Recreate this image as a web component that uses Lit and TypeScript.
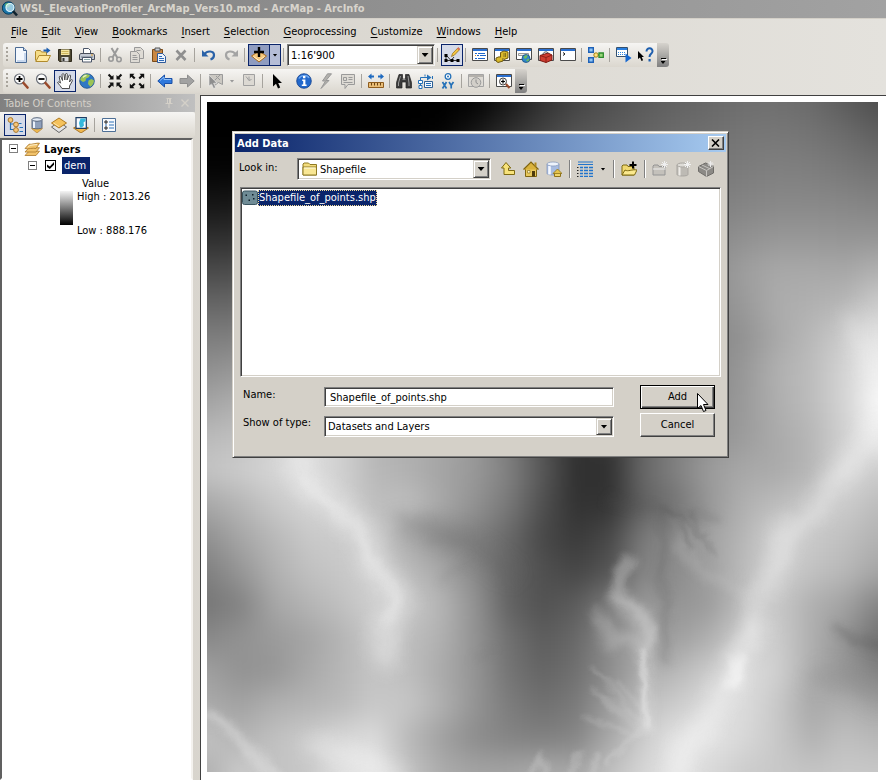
import { LitElement, html, svg, css, TemplateResult } from "lit";
import { customElement, property, state } from "lit/decorators.js";
import { classMap } from "lit/directives/class-map.js";

type Glyph = TemplateResult;

/* 16 x 16 drawings, keyed by command name */
const ICONS: Record<string, Glyph> = {
  newdoc: svg`<path d="M2.500 .5h8l3 3v12h-11z" fill="#f4f8fd" stroke="#4a6a94"/><path d="M4 14h8V6" fill="none" stroke="#c8d8ee" stroke-width="2"/><path d="M10.500 .5v3h3" fill="#cfdcee" stroke="#4a6a94"/>`,
  open: svg`<path d="M.5 13.500V4.500l1-1h4l1 1.500h5v3" fill="#f5dc86" stroke="#b08a2c"/><path d="M.8 14.500 4 8.500h11.500l-3 6z" fill="#ffe9a0" stroke="#b08a2c"/><path d="M8.500 3.500h4" stroke="#1c5fb0" stroke-width="2"/><path d="M11.500 .5 15.500 3.500l-4 3z" fill="#1c5fb0"/>`,
  save: svg`<path d="M1.500 2.500h13v12h-12l-1-1z" fill="#4c4630" stroke="#2f2a1c"/><path d="M4 2.500h8.500v5.500H4z" fill="#f4e6a4"/><path d="M4.500 4.500h7M4.500 6.500h7" stroke="#cdb55c"/><path d="M4.500 10h7v4.500h-7z" fill="#d9d9d9"/><path d="M5.500 11h2v3h-2z" fill="#333"/>`,
  print: svg`<path d="M4.500 6V1.500h5l2 2V6" fill="#fff" stroke="#4a5568"/><path d="M1.500 6.500h13l1 1.500v4.500h-15V8z" fill="#c4cad4" stroke="#4a4f5a"/><path d="M2 10h12" stroke="#77808c"/><path d="M3.500 10.500h9v4.500h-9z" fill="#fff" stroke="#4a5568"/><path d="M5 12.500h6" stroke="#8aa"/><path d="M12 8h2" stroke="#e09a20"/>`,
  cut: svg`<g fill="none" stroke="#9a9a9a"><path d="m4.500 1 6 10M11 1 5.500 10.500" stroke-width="2"/><circle cx="4" cy="12" r="2.200" stroke-width="1.600"/><circle cx="12" cy="12.500" r="2.200" stroke-width="1.600"/></g>`,
  copy: svg`<g fill="#dedbd5" stroke="#999"><path d="M5.500 .5h6l3 3v8h-9z"/><path d="M1.500 4.500h6l3 3v8h-9z"/><path d="M3.500 8.500h4M3.500 10.500h5M3.500 12.500h5M7.500 3.500h4"/></g>`,
  paste: svg`<path d="M1.500 2.500h10v12h-10z" fill="#c98742" stroke="#7a4a18"/><path d="M4 1h5v3H4z" fill="#c9ced6" stroke="#555"/><path d="M6.500 6.500h5l3 3v6h-8z" fill="#eef4fd" stroke="#2e5a9a"/><path d="M8 9.500h3M8 11.500h5M8 13.500h5" stroke="#2e6ab8"/>`,
  remove: svg`<path d="m3.500 3.500 9 9.500m0-9.500-9 9.500" stroke="#8f8f8f" stroke-width="2.600"/>`,
  undo: svg`<path d="M3.500 7C6 3.500 13 3.500 13 8c0 2.500-2 4-3.500 4.500" fill="none" stroke="#2a62a8" stroke-width="2.200"/><path d="M1 3v6.500h6.500z" fill="#2a62a8"/>`,
  redo: svg`<path d="M12.500 7C10 3.500 3 3.500 3 8c0 2.500 2 4 3.500 4.500" fill="none" stroke="#a4a4a4" stroke-width="2.200"/><path d="M15 3v6.500H8.500z" fill="#a4a4a4"/>`,
  adddata: svg`<path d="m8 15-7.500-6L8 4l7.500 5z" fill="#f6c77a" stroke="#a86a1e"/><path d="m2.500 9.500 5.500 4 5.500-4" fill="none" stroke="#fff0cc"/><path d="M8 0v10M3 5h10" stroke="#000" stroke-width="2.400"/>`,
  editor: svg`<path d="M2 8.500v5h12" fill="none" stroke="#333"/><path d="m3 9 4 4.500 3-3.500" fill="none" stroke="#333"/><g fill="#000"><path d="M.5 7h3v3h-3zM.5 12h3v3h-3zM6.500 12h3v3h-3zM12.500 12h3v3h-3z"/></g><path d="m7.500 9.500 1-3L14 .8l1.800 1.700-5.500 5.700z" fill="#f5c542" stroke="#8b6914" stroke-width=".7"/><path d="m13 1.800 1.200-1.500 1.800 1.500-1.300 1.500z" fill="#d86a5a"/>`,
  contents: svg`<path d="M.5 1.500h15v12H.5z" fill="#fff" stroke="#4a4a4a"/><path d="M1 2h14v2H1z" fill="#2a6fd0"/><path d="M3 6.500h2m1 0h7M5 8.500h2m1 0h6M3 11.500h2m1 0h7" stroke="#1f66c8"/><path d="M3 8.500h1" stroke="#e08a20"/>`,
  catalog: svg`<path d="M.5 1.500h15v12H.5z" fill="#fff" stroke="#4a4a4a"/><path d="M1 2h14v2H1z" fill="#2a6fd0"/><path d="M6.500 5.500 10 4l4 1v6l-4 1.500-1-1V14l-5 1.500-2-1.500v-3l3-1.200 1.500.4z" fill="#d9b92c" stroke="#6e5a10"/><path d="M10 6v4M11.500 6v4" stroke="#8a7418"/>`,
  search: svg`<path d="M.5 1.500h15v11H.5z" fill="#fff" stroke="#4a4a4a"/><path d="M1 2h14v2H1z" fill="#2a6fd0"/><path d="M2.500 6.500h10v2h-10z" fill="#eee" stroke="#999"/><circle cx="10" cy="11.500" r="4" fill="#2f86cc" stroke="#1b4f80" stroke-width=".8"/><path d="M7.500 10c1-1.500 3-2 4-1.500l-.5 2-2 1.500zM10 14l2-2.500 1.500.8L12 14.500z" fill="#6dbb5c"/>`,
  toolbox: svg`<path d="M.5 1.500h15v12H.5z" fill="#fff" stroke="#4a4a4a"/><path d="M1 2h14v2H1z" fill="#2a6fd0"/><path d="M2 8.500 10 6l4 2v5l-6 2.500-6-2z" fill="#cf3c30" stroke="#7d1a12"/><path d="m2 8.500 6 2 6-2.500M8 10.500v5" stroke="#8e2018" fill="none"/><path d="M5 7.500c0-3 5-3.500 5-1" fill="none" stroke="#444"/>`,
  python: svg`<path d="M.5 1.500h15v12H.5z" fill="#fff" stroke="#4a4a4a"/><path d="M1 2h14v2H1z" fill="#2a6fd0"/><path d="m3 5.500 2 1.500-2 1.500" fill="none" stroke="#111"/>`,
  model: svg`<path d="M3.500 3.500 8 8l-4.500 5M8 8h5" fill="none" stroke="#333"/><path d="M.7.7h4.600v4.600H.7zM.7 10.700h4.600v4.600H.7z" fill="#8fc4f4" stroke="#1f62b8" stroke-width="1.400"/><circle cx="8" cy="8" r="2.200" fill="#ffe27a" stroke="#a8841c"/><path d="M11 6h4.300v4.300H11z" fill="#9ad67a" stroke="#2c8a2c" stroke-width="1.300"/>`,
  windowplay: svg`<path d="M.5 .5h11v9H.5z" fill="#fff" stroke="#34506e"/><path d="M1 1h10v2H1z" fill="#2a7fe0"/><path d="M2 5.500h1m1 0h1m1 0h1m1 0h1M2 7.500h1m1 0h1m1 0h1m1 0h1" stroke="#2f86e0"/><path d="m9.500 6.500 6 4.500-6 4.500z" fill="#1668d0"/>`,
  whatsthis: svg`<path d="M0 4v8l2-1.500 1.500 3.500 1.600-.8L3.700 10H6z" fill="#000"/><path d="M8.500 4.500c0-4.500 6.500-4 6 0-.3 2.500-3 2.300-3 5.500" fill="none" stroke="#1f5fae" stroke-width="2"/><path d="M10.500 12h2.200v2.500h-2.200z" fill="#1f5fae"/>`,
  zoomin: svg`<circle cx="6.500" cy="6" r="5" fill="#fdfdfd" stroke="#6a6f78" stroke-width="1.200"/><path d="M6.500 3v6M3.500 6h6" stroke="#000" stroke-width="1.800"/><path d="m10.500 10 4 4.500" stroke="#9a4a2c" stroke-width="2.600" stroke-linecap="round"/>`,
  zoomout: svg`<circle cx="6.500" cy="6" r="5" fill="#fdfdfd" stroke="#6a6f78" stroke-width="1.200"/><path d="M3.500 6h6" stroke="#000" stroke-width="1.800"/><path d="m10.500 10 4 4.500" stroke="#9a4a2c" stroke-width="2.600" stroke-linecap="round"/>`,
  pan: svg`<path d="M5 15.500c-1-2-3-4-4.500-6 .8-1 2-.8 3 .7L2.200 4C2.500 2.800 3.700 3 4 4l1.500 3.500L5 1.500C5.500.3 6.700.5 7 1.500L7.800 7 8.500 1C9 0 10.200.2 10.300 1.200L10 7l2-4.500c.5-1 1.800-.6 1.600.5L12.500 9l1.500-2c.8-.8 1.800-.2 1.500.7L12.500 13v2.500z" fill="#fff" stroke="#3c3c3c" stroke-width=".9"/>`,
  globe: svg`<circle cx="8" cy="8" r="7.300" fill="#2f78c4" stroke="#1e4f88" stroke-width=".8"/><path d="M5 1.800c2-.8 4.500-.6 6 .6l-1.500 2L7 5.500 6.500 8 4 9 1.200 7C1.500 5 3 2.700 5 1.800zM9.500 7.500l3-1.500 2.500 1.500c0 2.500-1.500 5-3.500 6.200L9 11z" fill="#9cc455"/><path d="M4 4.500C5 3 6.500 2.500 7.500 2.600" stroke="#eaf6d4" stroke-width="1.300" fill="none"/>`,
  fixedin: svg`<g fill="#111"><path d="M6.500 6.500H2l1.500-1.500L.8 2.300 2.300.8 5 3.500 6.500 2zM9.500 6.500H14L12.500 5l2.700-2.700L13.700.8 11 3.500 9.500 2zM6.500 9.500H2L3.500 11 .8 13.700l1.500 1.500L5 12.500 6.500 14zM9.500 9.500H14L12.500 11l2.700 2.700-1.500 1.500L11 12.500 9.500 14z"/></g>`,
  fixedout: svg`<g fill="#111"><path d="M.8.8h4.700L4 2.300l2.500 2.500-1.500 1.500-2.600-2.500L.8 5.500zM15.200.8h-4.700L12 2.300 9.500 4.800 11 6.300l2.600-2.500 1.600 1.700zM.8 15.200h4.700L4 13.700l2.500-2.500L5 9.700l-2.600 2.500-1.600-1.700zM15.200 15.200h-4.700l1.500-1.500-2.500-2.500L11 9.700l2.600 2.500 1.600-1.700z"/></g>`,
  back: svg`<path d="M.8 8 7.500 2v3.500H15v5H7.500V14z" fill="#2f78dc" stroke="#1a4fa6"/><path d="M3 7.500 7 4v2.500h7" fill="none" stroke="#8fc0f8"/>`,
  forward: svg`<path d="M15.200 8 8.500 2v3.500H1v5h7.500V14z" fill="#a2a2a2" stroke="#8e8e8e"/>`,
  selectfeat: svg`<path d="M2.500 1.500h13v10l-4-2-4 3-5-2z" fill="#cbc8c2" stroke="#9a9a9a"/><path d="m9 3 4 4m0-5-6 6" stroke="#9a9a9a"/><path d="M2 2v11l2.600-2 2 4.500 2-1-2-4.300H10z" fill="#8e8e8e" stroke="#eee" stroke-width=".6"/>`,
  clearsel: svg`<path d="M2.500 1.500h11v11h-11z" fill="#dcd9d3" stroke="#a0a0a0"/><path d="m5 3.500 3 4v-4M8 7.500l2.500-1" stroke="#a0a0a0" fill="none"/>`,
  pointer: svg`<path d="M4 1v12.500l3-2.700 2 4.700 2.200-1-2-4.500H13z" fill="#000"/>`,
  identify: svg`<circle cx="8" cy="8" r="7.300" fill="#2268cc" stroke="#123f8c" stroke-width=".8"/><path d="M3 5.500C4.500 2 11 1.500 13 5" fill="none" stroke="#6fa8f0" stroke-width="1.500"/><path d="M7 3h2.400v2.200H7zM6.200 6.500h3.200v5h1.200v1.600H5.800v-1.600h1.400V8h-1z" fill="#fff"/>`,
  bolt: svg`<path d="M9.500.8 4.500 8h3L3 15.500 11 7.500H8L13.500.8z" fill="#b2b0ac" stroke="#979797"/>`,
  popup: svg`<path d="M1.500 1.500h13v10H8l-3 4v-4H1.500z" fill="#dedbd5" stroke="#9a9a9a"/><path d="M3.500 4.500h3v3h-3zM8.500 4.500h4M8.500 6.500h4M3.500 9.500h9" fill="none" stroke="#9a9a9a"/>`,
  measure: svg`<path d="M2 3.500h4M10 3.500h4" stroke="#1f6ac0" stroke-width="2"/><path d="M0 3.500 3.500.5v6zM16 3.500 12.500.5v6z" fill="#1f6ac0"/><path d="M.5 9.500h15v5H.5z" fill="#e9bd77" stroke="#8e5c1e"/><path d="M3.500 10v2.500M6.500 10v2.500M9.500 10v2.500M12.500 10v2.500" stroke="#6b4210"/>`,
  find: svg`<path d="M3 1.500h3.500V6H9.500V1.500H13l2.500 8v5.500H10V9H6v6H.5V9.500z" fill="#3a3a3a" stroke="#222" stroke-width=".7"/><path d="M4.500 3 2.500 10v3M12 3l1 7v3" stroke="#9a9a9a" fill="none"/><path d="M6.500 6.500h3" stroke="#888"/>`,
  route: svg`<path d="M2.500 13V4.500h9" fill="none" stroke="#2571b8"/><path d="m9 1.500 4.500 3-4.500 3z" fill="#2571b8"/><path d="M.5 7.500h4v3h-4z" fill="#fff" stroke="#2571b8"/><path d="M1 12.500h3v3H1z" fill="#fff" stroke="#2571b8"/><path d="M6.500 8.500h8v6h-8z" fill="#f4f8ff" stroke="#2c5f94"/><path d="M8 10.500h5M8 12.500h5M7 1.500v2M14.500 3v3" stroke="#2571b8"/>`,
  gotoxy: svg`<circle cx="8" cy="3.500" r="2.800" fill="#fff" stroke="#2571b8" stroke-width="1.300"/><circle cx="8" cy="3.500" r="1" fill="#2571b8"/><path d="m2.500 9 4 6.500m0-6.500-4 6.500M9 9l2.200 3.200v3.300M13.500 9l-2.300 3.200" stroke="#2571b8" stroke-width="1.700" fill="none"/>`,
  time: svg`<path d="M.5 1.500h15v12H.5z" fill="#dedbd5" stroke="#a4a4a4"/><path d="M1 2h14v2H1z" fill="#b4b1ac"/><circle cx="8" cy="9.500" r="4.800" fill="#d2cfc9" stroke="#9a9a9a"/><path d="M8 6.500v3l2 1.500" fill="none" stroke="#8e8e8e"/>`,
  viewer: svg`<path d="M.5 1.500h15v12H.5z" fill="#fff" stroke="#4a4a4a"/><path d="M1 2h14v2H1z" fill="#2a6fd0"/><circle cx="7" cy="8.500" r="3.500" fill="#f4f4f4" stroke="#444"/><path d="M7 6.500v4M5 8.500h4" stroke="#000" stroke-width="1.200"/><path d="m10 11 3.500 4" stroke="#9a4a2c" stroke-width="2.200"/>`,
  tocorder: svg`<path d="M3.500 5v7.500h4M3.500 7H8M11.500 6.500h3M12.500 10.500H16M12.500 14.500H16" stroke="#2571b8" fill="none" stroke-width="1.200"/><circle cx="3.500" cy="3" r="2.400" fill="#f5c67a" stroke="#a8762a"/><circle cx="9" cy="7.500" r="2.400" fill="#f5c67a" stroke="#a8762a"/><circle cx="9" cy="13" r="2.400" fill="#f5c67a" stroke="#a8762a"/>`,
  tocsource: svg`<path d="m8 16-5.500-4.500h11z" fill="#eeb84e" stroke="#a8762a" stroke-width=".6"/><path d="M3 2.500v8c0 1.800 10 1.800 10 0v-8z" fill="#8fa0bb" stroke="#56657c"/><path d="M5 4v7" stroke="#e9f0fa" stroke-width="2"/><ellipse cx="8" cy="2.500" rx="5" ry="1.800" fill="#e4ebf5" stroke="#56657c"/>`,
  tocvisible: svg`<path d="m.5 10 7.500 5.500 7.500-5.500L8 5z" fill="#e4e4e4" stroke="#666"/><path d="m.5 6 7.500 5 7.500-5L8 1z" fill="#f5c25c" stroke="#b07a1e"/><path d="m2.500 6 5.500 3.500" stroke="#ffe6ac"/>`,
  tocselect: svg`<path d="m.5 11 7.500 5 7.500-5L8 7z" fill="#f0b84e" stroke="#a8762a"/><path d="M3 .7h10.300v10.600H3z" fill="#f8fbff" stroke="#1c3c64" stroke-width="1.200"/><path d="M7.500 1.500h5v2.500l-2 1.500.5 3-2 2H7L6 6z" fill="#35b8dc"/>`,
  tocoptions: svg`<path d="M1.500 1.500h13v13h-13z" fill="#f8fafd" stroke="#4d6f96"/><path d="M4 4h2v2H4zM4 10h2v2H4z" fill="none" stroke="#222"/><path d="M8 5h5M8 8h5M8 11h5M4 8h2" stroke="#2f72b8"/>`,
  layers: svg`<g fill="#f2c36b" stroke="#a9772a" stroke-width=".8"><path d="m1 14.500 4-4.300h10.500L12 14.500z"/><path d="m1 11 4-4.300h10.500L12 11z"/><path d="M1 7.500 5 3.200C7 4 13 1.500 15.500 2.200L12 7.500C9 6.500 4 8.500 1 7.500z"/></g><path d="m4 6.300 2-2 7-.8" stroke="#fff2cd" fill="none"/>`,
  folder: svg`<path d="M1 14V3l1-1h4.500L8 3.500h6.500V14z" fill="#f3dc7c" stroke="#8f7a24"/><path d="M1 6h13.500v8H1z" fill="#f9e794" stroke="#8f7a24"/><path d="M2 7h11.500" stroke="#fffbe0"/>`,
  shapefile: svg`<rect x=".5" y="1" width="15" height="13.500" rx="2" fill="#6f8c96" stroke="#3a5560"/><path d="M3.500 4.500h1.500V6H3.500zM10 4h1.500v1.500H10zM6.500 9.500H8V11H6.500zM11 8h1.500v1.500H11z" fill="#0c1c26"/>`,
  up: svg`<path d="M6 1.500 1.500 7H4v6.500h10.500v-4h-6V7h2.300z" fill="#f7e27a" stroke="#7e6a10"/>`,
  home: svg`<path d="M2.500 8v7.500h11V8" fill="#e8c85c" stroke="#7e6410"/><path d="M.5 8.500 8 1l7.500 7.500" fill="#d9b23c" stroke="#7e6410" stroke-width="1.200"/><path d="M11.500 1.500h2v4h-2z" fill="#b08a20"/><path d="M9 10h3v5.500H9z" fill="#4c3a0c"/><path d="M4.500 9.500h2.500v2.500H4.500z" fill="#fff6c8" stroke="#7e6410" stroke-width=".6"/>`,
  dbhome: svg`<path d="M1 3v9.500c0 2 12 2 12 0V3z" fill="#a8bce0" stroke="#8093b8" stroke-width=".7"/><path d="M3.500 5v8.500" stroke="#f4f8ff" stroke-width="2.600"/><ellipse cx="7" cy="3" rx="6" ry="2" fill="#eef3fb" stroke="#8093b8" stroke-width=".7"/><path d="M8.500 12v3.500h6V12" fill="#f0d468" stroke="#8e7218"/><path d="m7 12.500 4.500-4.500 4.500 4.500z" fill="#e6c44c" stroke="#8e7218" stroke-width=".8"/>`,
  list: svg`<path d="M1 1h15M1 3.500h15" stroke="#2074cc"/><path d="M3 6.500h3m1 0h4m1 0h4M3 9.500h3m1 0h4m1 0h4M3 12.500h3m1 0h4m1 0h4M3 15.500h3m1 0h4m1 0h4" stroke="#2074cc" stroke-width="1.600"/><path d="M0 6.500h1.500M0 9.500h1.500M0 12.500h1.500M0 15.500h1.500" stroke="#222"/>`,
  connect: svg`<path d="M1 14V5l1-1h4l1 1.500h6V14z" fill="#f0d870" stroke="#7e6a10"/><path d="m1 14 3-5c3 2 7-1 12 0l-2.500 5z" fill="#fbe98e" stroke="#7e6a10"/><path d="M12 .5v7M8.500 4h7" stroke="#000" stroke-width="2"/>`,
  newfolder: svg`<path d="M1 14V5l1-1h4l1 1.500h6V14z" fill="#c4c1bb" stroke="#949494"/><path d="M1 8h12.500" stroke="#eee"/><path d="M12.500 0v7M9 3.500h7M10 1l5 5m0-5-5 5" stroke="#efefef"/>`,
  newgdb: svg`<path d="M2 4v9.500c0 2 11 2 11 0V4z" fill="#bdbab4" stroke="#a8a5a0"/><path d="M4.500 5v9.500" stroke="#eeece8" stroke-width="2"/><ellipse cx="7.500" cy="4" rx="5.500" ry="2" fill="#dedcd7" stroke="#a8a5a0"/><path d="M12.500 0v7M9 3.500h7M10 1l5 5m0-5-5 5" stroke="#f2f2f2"/>`,
  newtoolbox: svg`<path d="m.5 5.500 7-3.500 8 3v7l-7 3.500-8-5z" fill="#8c8a86" stroke="#6e6c68"/><path d="m.5 5.500 8 4 7-4M8.500 9.500v6M4 4l8 3.800" stroke="#c8c6c2" fill="none"/><path d="M12.500 0v6M9.500 3h6M10.500 1l4 4m0-4-4 4" stroke="#ececec"/>`,
  app: svg`<circle cx="6.500" cy="7" r="6.200" fill="#1b75a8" stroke="#083c5c"/><path d="M3 3c2-1.500 5-1.500 6 0L7 6 4 7z" fill="#5fb96a"/><circle cx="8" cy="6.500" r="4" fill="#bfe6f4" fill-opacity=".75" stroke="#dff4fb" stroke-width="1.200"/><path d="m11 10 4 4.500" stroke="#10222e" stroke-width="2.600"/>`,
  pin: svg`<path d="M5.500 3.500h5M6.500 3.500V8M9.500 3.500V8M8.500 3.500V8M4.500 8.500h7M8 9v4" stroke="#d4d0c8" fill="none"/>`,
  close: svg`<path d="m4.500 4.500 7 7m0-7-7 7" stroke="#d4d0c8" stroke-width="1.400"/>`,
};

const icon = (name: string) =>
  html`<svg class="icon" viewBox="0 0 16 16" width="16" height="16" aria-hidden="true">${ICONS[name]}</svg>`;

/* Grey level of the elevation model on an even 21 x 21 lattice, one row per string */
const ELEVATION = [
  "00 00 00 00 00 00 00 00 03 18 30 44 50 5a 62 68 6e 6f 6a 5c 4e",
  "00 00 00 00 00 00 00 04 18 30 44 54 5c 64 6c 70 76 78 74 6c 60",
  "04 04 04 08 0c 10 18 20 30 44 54 60 66 6c 74 76 7c 80 7e 78 72",
  "14 18 18 1c 22 2a 34 40 4c 58 60 68 6e 74 7a 7e 84 88 88 86 82",
  "2c 30 34 38 40 48 50 58 60 66 6c 70 76 7c 82 88 90 96 96 94 94",
  "48 4c 54 58 60 64 68 6c 6c 6c 6c 70 78 80 88 90 9e a8 a8 a6 b0",
  "64 68 70 78 80 80 80 7c 78 70 64 64 70 80 88 8c 9a ac b0 b6 cc",
  "7c 80 8c 94 98 98 90 88 80 70 58 54 60 78 84 88 92 a8 b8 cc e6",
  "90 98 a8 b0 b0 a8 a0 98 88 70 50 44 50 70 80 88 98 b0 bc d4 f0",
  "a4 b0 c0 c8 c0 b0 a8 a0 90 74 4c 3a 44 68 7c 8c 9a ae bc d4 fa",
  "ba c0 d0 dc d0 b8 b0 a8 98 78 50 32 38 60 7c 90 9c aa b6 d0 ec",
  "c4 cc d6 e0 d0 b8 b0 a4 98 80 58 30 30 68 82 9c a8 aa b6 dc cc",
  "a8 b6 c8 d4 d4 be be a8 92 78 50 32 34 60 74 98 b0 bc c8 cc bc",
  "90 a6 b8 c8 cc cc aa 90 80 68 48 3a 48 7a 8c a2 b6 d4 ca c0 b2",
  "80 96 b0 c0 c8 d0 bc a8 88 64 50 46 54 84 8a a0 bc d0 c2 b8 a6",
  "76 82 a6 b4 c0 d0 ca b4 92 62 52 5c 7c 98 94 9c be c8 b0 a2 84",
  "88 92 9a a4 b4 c8 be b0 92 70 5c 68 8c a8 9e b0 d0 cc b0 94 70",
  "a0 92 96 a8 b6 c4 be aa 94 74 64 70 8c ac b8 cc dc d0 ae 98 80",
  "aa a2 b0 b4 ba c8 c6 b0 94 7c 70 7a 9c c0 cc dc dc c8 a8 b0 a6",
  "c2 b4 c0 cc d8 dc b8 a0 8c 84 80 86 a8 cc e4 e4 d8 c8 b2 c0 b8",
  "b0 cc c2 c8 e2 ea c4 ac a4 a4 ac a8 c0 d6 e6 d8 cc c8 c4 c8 c8",
].map((row) => row.split(" "));

const CELL = 670 / 20;

/* Ridges and gullies laid over the lattice: path, colour, width, opacity, blur */
const CRESTS: [string, string, number, number, string][] = [
  ["M88 345L96 379 125 402 153 426 166 462 193 496 178 522 180 556", "#f0f0f0", 22, 0.5, "wide"],
  ["M96 375L125 405 153 428 168 465 192 496 178 522", "#f4f4f4", 6, 0.4, "soft"],
  ["M0 612Q25 625 45 650L68 676", "#f0f0f0", 8, 0.5, "soft"],
  ["M105 642L145 654 190 672", "#f4f4f4", 14, 0.45, "wide"],
  ["M668 320L653 352 620 385 610 412 580 426 576 449 563 479 546 496 550 529", "#f4f4f4", 16, 0.5, "wide"],
  ["M550 529L533 549 523 579 500 622 476 646 470 676", "#f8f8f8", 20, 0.45, "wide"],
  ["M533 560L523 582", "#fff", 10, 0.6, "soft"],
  ["M645 215L655 250 668 270", "#f4f4f4", 16, 0.35, "wide"],
  ["M423 459L413 472 410 492 433 509 443 532 436 546 440 582 440 629", "#e8e8e8", 10, 0.45, "soft"],
  ["M436 546L440 582 440 626", "#f0f0f0", 5, 0.4, "fine"],
  ["M392 515L404 540 440 536M410 500L432 520", "#c8c8c8", 14, 0.35, "soft"],
  ["M440 628L386 566M438 632L383 589M436 634L376 616M440 610L410 584M438 622L396 596", "#d8d8d8", 4, 0.26, "fine"],
  ["M325 676L335 652 340 672M362 676L372 650M380 672L388 652M398 660L430 632", "#d8d8d8", 5, 0.35, "fine"],
  ["M195 420Q240 430 262 442L303 470", "#606060", 14, 0.35, "wide"],
  ["M235 482L262 460M285 548L268 556", "#707070", 5, 0.2, "soft"],
  ["M400 398L440 408 462 409 508 416", "#505050", 5, 0.3, "soft"],
  ["M462 409L490 430 508 452M480 412L500 434M470 420L482 446", "#505050", 4, 0.22, "fine"],
  ["M456 408L455 470 460 560", "#505050", 8, 0.24, "soft"],
  ["M468 440L490 465 520 482 545 497", "#c8c8c8", 8, 0.28, "soft"],
  ["M676 548L655 540 630 526", "#4c4c4c", 8, 0.3, "soft"],
  ["M676 600Q640 570 610 575", "#777", 20, 0.2, "wide"],
];

const BLURS: [string, number, number][] = [["wide", 9, 10], ["soft", 5, 12], ["fine", 2, 16]];

@customElement("terrain-map")
export class TerrainMap extends LitElement {
  static styles = css`
    :host { display: block; background: #888; overflow: hidden; }
    .terrain { display: block; width: 100%; height: 100%; }
    .crest { fill: none; stroke-linecap: round; stroke-linejoin: round; }
  `;

  render() {
    return html`<svg class="terrain" viewBox="0 0 671 670" preserveAspectRatio="none" role="img" aria-label="dem">
      <defs>
        <filter id="lattice" filterUnits="userSpaceOnUse" x="-60" y="-60" width="791" height="790" color-interpolation-filters="sRGB">
          <feGaussianBlur stdDeviation="8 14" />
        </filter>
        ${BLURS.map(
          ([id, blur, wobble]) => svg`<filter id=${id} filterUnits="userSpaceOnUse" x="-60" y="-60" width="791" height="790" color-interpolation-filters="sRGB">
            <feGaussianBlur in="SourceGraphic" stdDeviation=${blur} result="b" />
            <feTurbulence type="fractalNoise" baseFrequency="0.035" numOctaves="3" seed="4" result="n" />
            <feDisplacementMap in="b" in2="n" scale=${wobble} xChannelSelector="R" yChannelSelector="G" />
          </filter>`
        )}
        ${ELEVATION.map(
          (row, r) => svg`<linearGradient id=${"row" + r} gradientUnits="userSpaceOnUse" x1="0" x2="671" y1="0" y2="0">
            ${row.map((v, c) => svg`<stop offset=${c / 20} stop-color=${"#" + v + v + v} />`)}
          </linearGradient>`
        )}
      </defs>
      <g filter="url(#lattice)">
        ${ELEVATION.map((_, r) => {
          const first = r === 0;
          const last = r === ELEVATION.length - 1;
          const top = first ? -60 : (r - 0.5) * CELL;
          const bottom = last ? 730 : (r + 0.5) * CELL + 1;
          return svg`<rect x="-60" y=${top} width="791" height=${bottom - top} fill=${`url(#row${r})`} />`;
        })}
      </g>
      ${BLURS.map(
        ([id]) => svg`<g filter=${`url(#${id})`}>
          ${CRESTS.filter((c) => c[4] === id).map(
            ([d, color, width, opacity]) =>
              svg`<path class="crest" d=${d} stroke=${color} stroke-width=${width} stroke-opacity=${opacity} />`
          )}
        </g>`
      )}
    </svg>`;
  }
}

const shared = css`
  :host, button, input, select {
    font-family: "DejaVu Sans Condensed", "DejaVu Sans", sans-serif;
    font-size: 11px;
    line-height: 14px;
    color: #000;
  }
  * { box-sizing: border-box; }
  button, input, select { margin: 0; padding: 0; border: 0; border-radius: 0; background: none; outline: none; }
  .icon { display: block; flex: none; }
  .tool { display: flex; align-items: center; justify-content: center; flex: none; width: 22px; height: 22px; }
  .tool.on { background: #d5dae8; border: 1px solid #0a246a; }
  .sep { flex: none; width: 1px; height: 14px; background: #a6a39d; margin: 0 3px 0 2px; }
  .caret { width: 5px; height: 3px; background: #000; clip-path: polygon(0 0, 100% 0, 50% 100%); }
  .sunken {
    border: 1px solid; border-color: #808080 #fff #fff #808080; padding: 1px;
    box-shadow: inset 1px 1px #404040, inset -1px -1px #d4d0c8; background: #fff;
  }
  .combo { display: flex; align-items: stretch; }
  .combo .drop {
    flex: none; width: 16px; display: flex; align-items: center; justify-content: center; background: #d4d0c8;
    border: 1px solid; border-color: #d4d0c8 #404040 #404040 #d4d0c8; box-shadow: inset 1px 1px #fff, inset -1px -1px #808080;
    pointer-events: none;
  }
  .combo .drop .caret { width: 7px; height: 4px; }
  .combo select, .combo input { appearance: none; flex: 1; min-width: 0; padding: 1px 0 0 2px; }
`;

@customElement("add-data-dialog")
export class AddDataDialog extends LitElement {
  @state() private file = "Shapefile_of_points.shp";

  static styles = [
    shared,
    css`
      :host {
        display: block; box-sizing: border-box; background: #d4d0c8; padding: 1px;
        border: 1px solid; border-color: #d4d0c8 #404040 #404040 #d4d0c8;
        box-shadow: inset 1px 1px #fff, inset -1px -1px #808080;
      }
      .caption {
        display: flex; align-items: center; justify-content: space-between; height: 18px; margin: 1px;
        padding: 0 2px; background: linear-gradient(90deg, #0a246a, #a6caf0); color: #fff; font-weight: bold;
      }
      .title { margin: 0; padding-top: 1px; font-size: 11px; }
      .raised {
        background: #d4d0c8; border: 1px solid; border-color: #fff #404040 #404040 #fff; box-shadow: inset -1px -1px #808080;
      }
      .shut { display: flex; align-items: center; justify-content: center; width: 16px; height: 14px; }
      .places { display: flex; align-items: center; padding: 4px 6px 0 5px; height: 28px; }
      .places label { width: 58px; padding-bottom: 2px; }
      .folders { width: 194px; height: 22px; margin-right: 6px; }
      .folders .icon { margin: 1px 0 0 3px; }
      .places .tool + .tool { margin-left: 1px; }
      .places .sep { height: 18px; margin: 0 4px; background: #808080; box-shadow: 1px 0 #fff; }
      .narrow { width: 12px; }
      .files { margin: 6px 6px 0; height: 190px; padding: 2px 1px; list-style: none; }
      .file { display: flex; align-items: center; height: 16px; }
      .name { background: #0a246a; color: #fff; outline: 1px dotted #f5db95; outline-offset: -1px; padding: 1px; height: 16px; }
      .form {
        display: grid; grid-template-columns: 81px 1fr 75px; grid-template-rows: 24px 24px; row-gap: 4px;
        padding: 8px 12px 19px 9px; align-items: center;
      }
      .form label { padding-bottom: 5px; }
      .field { height: 20px; margin-right: 26px; padding-left: 5px; }
      .form .combo { height: 21px; margin-right: 26px; align-self: end; }
      .push { height: 24px; padding-bottom: 1px; }
      .push.default { border-color: #000; box-shadow: inset 1px 1px #fff, inset -1px -1px #404040, inset -2px -2px #808080; }
    `,
  ];

  private tool(name: string, label: string) {
    return html`<button class="tool" aria-label=${label}>${icon(name)}</button>`;
  }

  render() {
    return html`
      <header class="caption">
        <h2 class="title">Add Data</h2>
        <button class="raised shut" aria-label="Close">
          <svg class="icon" viewBox="0 0 10 8" width="10" height="8"><path d="m1 .5 7 7M8 .5l-7 7" stroke="#000" stroke-width="1.600" /></svg>
        </button>
      </header>
      <div class="places">
        <label for="lookin">Look in:</label>
        <div class="combo sunken folders">
          ${icon("folder")}
          <select id="lookin"><option>Shapefile</option></select>
          <span class="drop"><i class="caret"></i></span>
        </div>
        ${this.tool("up", "Up one level")}${this.tool("home", "Home folder")}${this.tool("dbhome", "Default geodatabase")}
        <span class="sep"></span>
        ${this.tool("list", "View")}
        <button class="tool narrow" aria-label="View options"><i class="caret"></i></button>
        <span class="sep"></span>
        ${this.tool("connect", "Connect to folder")}
        <span class="sep"></span>
        ${this.tool("newfolder", "New folder")}${this.tool("newgdb", "New geodatabase")}${this.tool("newtoolbox", "New toolbox")}
      </div>
      <ul class="files sunken">
        <li class="file">${icon("shapefile")}<span class="name">${this.file}</span></li>
      </ul>
      <div class="form">
        <label for="name">Name:</label>
        <input id="name" class="field sunken" type="text" .value=${this.file} />
        <button class="raised push default">Add</button>
        <label for="kind">Show of type:</label>
        <div class="combo sunken">
          <select id="kind"><option>Datasets and Layers</option></select>
          <span class="drop"><i class="caret"></i></span>
        </div>
        <button class="raised push">Cancel</button>
      </div>
    `;
  }
}

@customElement("table-of-contents")
export class TableOfContents extends LitElement {
  @property() layer = "dem";

  static styles = [
    shared,
    css`
      :host { display: flex; flex-direction: column; }
      .caption {
        display: flex; align-items: center; height: 18px; padding: 0 2px 0 4px; margin-right: 1px;
        background: linear-gradient(90deg, #808080, #c0c0c0); color: #d4d0c8;
      }
      .title { margin: 0; flex: 1; font-size: 11px; font-weight: normal; padding-top: 2px; }
      .caption button { width: 16px; height: 16px; }
      .bar {
        display: flex; align-items: center; height: 25px; padding-left: 4px; margin-right: 1px;
        background: linear-gradient(#f6f5f3, #dcd8d0); border-radius: 0 2px 2px 0;
      }
      .tree {
        flex: 1; margin: 1px 3px 0 0; padding: 0 0 0 7px; background: #fff; border: 2px solid;
        border-color: #606060 #f4f2ee #fff #606060;
      }
      .tree ul { list-style: none; margin: 0; padding: 0; }
      .node { display: flex; align-items: center; height: 17px; }
      .toggle { width: 9px; height: 9px; border: 1px solid #808080; display: flex; align-items: center; justify-content: center; }
      .dash { width: 5px; height: 1px; background: #000; }
      .group .icon { margin: 0 4px 0 6px; }
      .group b { padding-top: 2px; }
      .child { padding-left: 19px; }
      .tick {
        appearance: none; width: 11px; height: 11px; margin: 0 6px 0 8px; border: 1px solid #000; background: #fff;
        display: flex; align-items: center; justify-content: center;
      }
      .tick:checked::after {
        content: ""; width: 7px; height: 7px; background: #000;
        clip-path: polygon(0 35%, 40% 65%, 100% 0, 100% 40%, 40% 100%, 0 70%);
      }
      .selected { background: #0a246a; color: #fff; padding: 2px 4px 1px 2px; height: 17px; }
      .legend { display: grid; grid-template-columns: 13px auto; column-gap: 4px; padding-left: 51px; justify-content: start; }
      .heading { grid-column: 1 / 3; padding: 3px 0 0 22px; height: 17px; }
      .ramp { height: 34px; background: linear-gradient(#f4f4f4, #000); }
      .range { display: flex; flex-direction: column; justify-content: space-between; height: 48px; margin-top: -1px; }
    `,
  ];

  render() {
    return html`
      <header class="caption">
        <h2 class="title">Table Of Contents</h2>
        <button aria-label="Auto hide">${icon("pin")}</button>
        <button aria-label="Close">${icon("close")}</button>
      </header>
      <div class="bar">
        <button class="tool on" aria-label="List by drawing order">${icon("tocorder")}</button>
        <button class="tool" aria-label="List by source">${icon("tocsource")}</button>
        <button class="tool" aria-label="List by visibility">${icon("tocvisible")}</button>
        <button class="tool" aria-label="List by selection">${icon("tocselect")}</button>
        <span class="sep"></span>
        <button class="tool" aria-label="Options">${icon("tocoptions")}</button>
      </div>
      <div class="tree">
        <div class="node group">
          <button class="toggle" aria-label="Collapse Layers"><i class="dash"></i></button>
          ${icon("layers")}<b>Layers</b>
        </div>
        <ul>
          <li>
            <div class="node child">
              <button class="toggle" aria-label="Collapse layer"><i class="dash"></i></button>
              <input class="tick" id="vis" type="checkbox" checked />
              <label class="selected" for="vis">${this.layer}</label>
            </div>
            <div class="legend">
              <span class="heading">Value</span>
              <i class="ramp"></i>
              <div class="range"><span>High : 2013.26</span><span>Low : 888.176</span></div>
            </div>
          </li>
        </ul>
      </div>
    `;
  }
}

const MENUS = ["File", "Edit", "View", "Bookmarks", "Insert", "Selection", "Geoprocessing", "Customize", "Windows", "Help"];
const FILE_TOOLS = ["newdoc", "open", "save", "print", "|", "cut", "copy", "paste", "remove", "|", "undo", "redo", "|"];
const WINDOW_TOOLS = ["|", "editor*", "|", "contents", "catalog", "search", "toolbox", "python", "|", "model", "|", "windowplay", "whatsthis"];
const NAV_TOOLS = [
  "zoomin", "zoomout", "pan*", "globe", "|", "fixedin", "fixedout", "|", "back", "forward", "|", "selectfeat", "v", "clearsel",
  "|", "pointer", " ", "identify", "bolt", "popup", "|", "measure", "|", "find", "route", "gotoxy", "|", "time", "|", "viewer",
];

@customElement("app-root")
export class AppRoot extends LitElement {
  static styles = [
    shared,
    css`
      :host {
        display: flex; flex-direction: column; min-height: 100vh; position: relative; overflow: hidden;
        background: linear-gradient(90deg, #d5d1c9, #e4e2dd);
      }
      .titlebar {
        display: flex; align-items: center; gap: 2px; height: 19px; padding-left: 2px; flex: none;
        background: linear-gradient(90deg, #828282, #a2a2a2); border-bottom: 1px solid #d4d0c8;
      }
      .title { margin: 0; font-size: 11px; color: #d8d4cc; white-space: nowrap; }
      .menus { display: flex; height: 24px; flex: none; padding-left: 4px; }
      .menu { padding: 1px 7px 0; }
      .menu u { text-underline-offset: 2px; }
      .strip { display: flex; height: 24px; margin: 0 0 2px 3px; flex: none; }
      .tools { display: flex; align-items: center; padding-left: 7px; background: linear-gradient(#f6f5f3, #dbd7cf); border-radius: 3px 0 0 3px; }
      .grip { width: 2px; height: 16px; margin-left: -4px; margin-right: 2px; background: repeating-linear-gradient(#a8a49c 0 2px, transparent 2px 4px); }
      .gap { width: 5px; }
      .narrow { width: 12px; }
      .faded { background: #999; }
      .add { background: #8f9cc0; border: 1px solid #0a246a; }
      .addmore { width: 11px; background: #b5bdd6; border: 1px solid #0a246a; border-left: 0; }
      .scale { width: 148px; height: 22px; border-color: #808080 #f4f4f4 #f4f4f4 #808080; }
      .overflow {
        width: 12px; display: flex; flex-direction: column; align-items: center; justify-content: flex-end; gap: 2px;
        padding-bottom: 3px; background: linear-gradient(#d6d3cd, #808080); border-radius: 0 3px 3px 0;
      }
      .overflow::before { content: ""; width: 5px; height: 1px; background: #000; box-shadow: 1px 1px #fff; }
      .overflow .caret { box-shadow: none; }
      .work { display: flex; flex: 1; margin-top: -1px; }
      table-of-contents { width: 196px; flex: none; }
      .frame {
        flex: 1; display: flex; margin: 1px 0 0 4px; padding: 6px 8px 8px 6px; background: #fff;
        border-left: 1px solid #404040; border-top: 1px solid #404040;
      }
      terrain-map { flex: 1; }
      add-data-dialog { position: absolute; left: 232px; top: 131px; width: 497px; }
      .cursor { position: absolute; left: 696px; top: 392px; }
    `,
  ];

  private item(name: string) {
    if (name === "|") return html`<span class="sep"></span>`;
    if (name === " ") return html`<span class="gap"></span>`;
    if (name === "v") return html`<button class="tool narrow" aria-label="More"><i class="caret faded"></i></button>`;
    const on = name.endsWith("*");
    const key = on ? name.slice(0, -1) : name;
    return html`<button class=${classMap({ tool: true, on })} aria-label=${key}>${icon(key)}</button>`;
  }

  private more() {
    return html`<button class="overflow" aria-label="Toolbar options"><i class="caret"></i></button>`;
  }

  render() {
    return html`
      <header class="titlebar">
        ${icon("app")}
        <h1 class="title">WSL_ElevationProfiler_ArcMap_Vers10.mxd - ArcMap - ArcInfo</h1>
      </header>
      <nav class="menus">
        ${MENUS.map((m) => html`<button class="menu"><u>${m[0]}</u>${m.slice(1)}</button>`)}
      </nav>
      <div class="strip">
        <div class="tools">
          <i class="grip"></i>
          ${FILE_TOOLS.map((t) => this.item(t))}
          <button class="tool add" aria-label="Add data">${icon("adddata")}</button>
          <button class="tool addmore" aria-label="Add data options"><i class="caret"></i></button>
          <span class="sep"></span>
          <div class="combo sunken scale">
            <input type="text" aria-label="Map scale" value="1:16'900" />
            <span class="drop"><i class="caret"></i></span>
          </div>
          ${WINDOW_TOOLS.map((t) => this.item(t))}
        </div>
        ${this.more()}
      </div>
      <div class="strip">
        <div class="tools"><i class="grip"></i>${NAV_TOOLS.map((t) => this.item(t))}</div>
        ${this.more()}
      </div>
      <main class="work">
        <table-of-contents></table-of-contents>
        <section class="frame"><terrain-map></terrain-map></section>
      </main>
      <add-data-dialog></add-data-dialog>
      <svg class="cursor" viewBox="0 0 13 21" width="13" height="21" aria-hidden="true">
        <path d="M1.500 1.500v15l3.500-3 2.500 6 2.500-1-2.500-6h4.500z" fill="#fff" stroke="#000" />
      </svg>
    `;
  }
}
